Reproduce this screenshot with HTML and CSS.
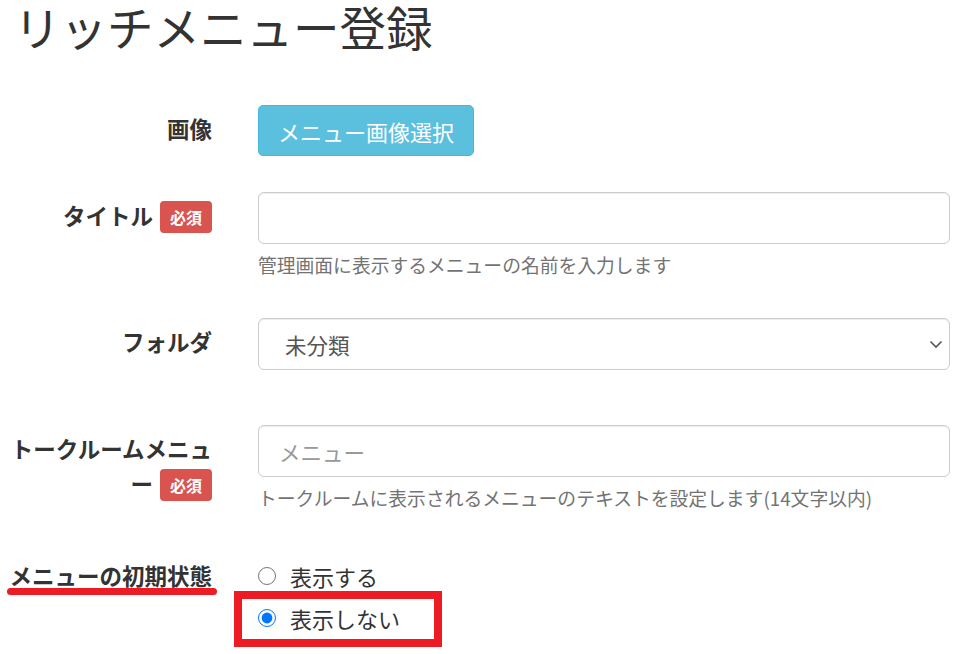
FILE: index.html
```html
<!DOCTYPE html>
<html lang="ja">
<head>
  <meta charset="UTF-8" />
  <meta name="viewport" content="width=device-width, initial-scale=1.0"/>
  <title>リッチメニュー登録</title>
  <link rel="stylesheet" href="styles.css">
</head>
<body>
  <h1 class="page-title">リッチメニュー登録</h1>

  <form class="menu-form">
    <div class="form-row row-image">
      <label class="form-label">画像</label>
      <div class="form-field">
        <button type="button" class="btn-image">メニュー画像選択</button>
      </div>
    </div>

    <div class="form-row row-title">
      <label class="form-label" for="title">タイトル<span class="badge-required">必須</span></label>
      <div class="form-field">
        <input type="text" id="title" class="form-input">
        <p class="help-text">管理画面に表示するメニューの名前を入力します</p>
      </div>
    </div>

    <div class="form-row row-folder">
      <label class="form-label" for="folder">フォルダ</label>
      <div class="form-field">
        <div class="select-wrap">
          <select id="folder" class="form-input form-select">
            <option>未分類</option>
          </select>
          <svg class="select-arrow" width="14" height="9" viewBox="0 0 14 9">
            <polyline points="1.5,1.5 7,7 12.5,1.5" fill="none" stroke="#555" stroke-width="1.6"/>
          </svg>
        </div>
      </div>
    </div>

    <div class="form-row row-chat">
      <label class="form-label" for="chatbar">トークルームメニュー<span class="badge-required">必須</span></label>
      <div class="form-field">
        <input type="text" id="chatbar" class="form-input" placeholder="メニュー">
        <p class="help-text">トークルームに表示されるメニューのテキストを設定します(14文字以内)</p>
      </div>
    </div>

    <div class="form-row row-state">
      <label class="form-label state-label">メニューの初期状態</label>
      <div class="form-field">
        <div class="radio-list">
          <label class="radio-item"><input type="radio" name="selected" value="1">表示する</label>
          <label class="radio-item"><input type="radio" name="selected" value="0" checked>表示しない</label>
        </div>
      </div>
      <!-- 赤い注釈 -->
      <span class="mark-underline"></span>
      <span class="mark-box"></span>
    </div>
  </form>
</body>
</html>
```

FILE: styles.css
```css
* { margin:0; padding:0; box-sizing:border-box; }
html, body { height:100%; overflow:hidden; }
body {
  font-family:"Noto Sans CJK JP","Noto Sans",sans-serif;
  color:#333;
  background:#fff;
}
.page-title {
  font-size:46.5px;
  font-weight:normal;
  line-height:52px;
  height:60px;
  padding-left:14px;
  color:#333;
}
.menu-form {
  margin-top:45px;
  padding:0 9px 0 6px;
}
.form-row {
  display:flex;
  position:relative;
}
.form-label {
  width:206px;
  flex:none;
  text-align:right;
  font-size:22.5px;
  font-weight:bold;
  line-height:35px;
  padding-top:6px;
}
.form-field {
  flex:1;
  margin-left:46px;
}
.row-image { margin-bottom:36px; }
.row-title { margin-bottom:40px; }
.row-folder { margin-bottom:55px; }
.row-chat { margin-bottom:44px; }

.btn-image {
  height:51px;
  padding:0 19px;
  background:#5bc0de;
  border:1px solid #46b8da;
  border-radius:5px;
  color:#fff;
  font-family:inherit;
  font-size:22px;
}
.badge-required {
  display:inline-block;
  vertical-align:middle;
  margin:-4px 0 0 7px;
  height:32px;
  line-height:32px;
  padding:0 10px;
  background:#d9534f;
  border-radius:4px;
  color:#fff;
  font-size:16px;
  font-weight:bold;
}
.form-input {
  display:block;
  width:100%;
  height:52px;
  padding:0 20px;
  border:1px solid #ccc;
  border-radius:6px;
  box-shadow:inset 0 1px 1px rgba(0,0,0,0.075);
  font-family:inherit;
  font-size:21.5px;
  color:#555;
  background:#fff;
}
.form-input::placeholder { color:#999; }
.select-wrap { position:relative; }
.form-select {
  -webkit-appearance:none;
  appearance:none;
  padding-left:26px;
}
.select-arrow {
  position:absolute;
  right:7px;
  top:22px;
}
.help-text {
  margin-top:8px;
  font-size:18.8px;
  line-height:26px;
  color:#737373;
}

.state-label { padding-top:3px; }
.radio-list { display:flex; flex-direction:column; }
.radio-item {
  display:flex;
  align-items:center;
  height:42px;
  font-size:22px;
  color:#333;
}
.radio-item input {
  width:18px;
  height:18px;
  margin:0 14px 0 0;
}
.mark-underline {
  position:absolute;
  left:1px;
  top:33px;
  width:210px;
  height:7px;
  border-radius:4px;
  background:#ed1c24;
}
.mark-box {
  position:absolute;
  left:228px;
  top:36px;
  width:208px;
  height:56px;
  border:8px solid #ed1c24;
}
```
